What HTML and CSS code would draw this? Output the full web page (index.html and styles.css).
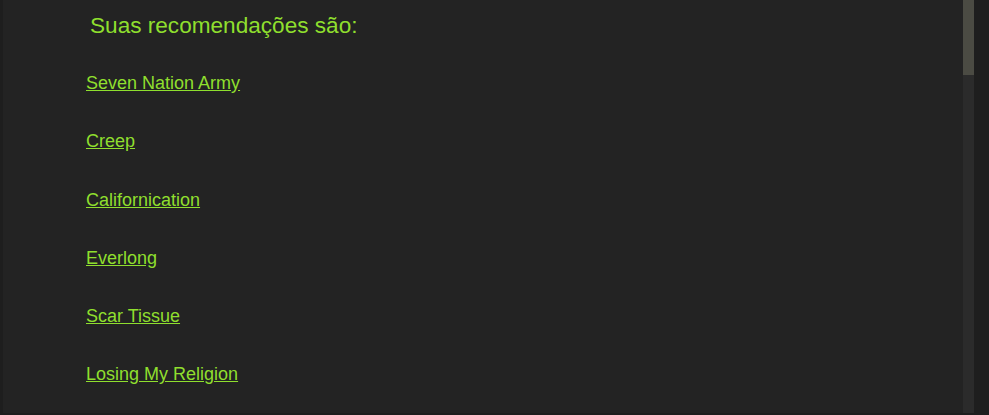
FILE: index.html
```html
<!DOCTYPE html>
<html lang="pt-BR">
<head>
<meta charset="utf-8">
<title>Recomendações</title>
<link rel="stylesheet" href="styles.css">
</head>
<body>
<main class="panel">
  <section class="results">
    <h2 class="title">Suas recomendações são:</h2>
    <ul class="list">
      <li><a href="#">Seven Nation Army</a></li>
      <li><a href="#">Creep</a></li>
      <li><a href="#">Californication</a></li>
      <li><a href="#">Everlong</a></li>
      <li><a href="#">Scar Tissue</a></li>
      <li><a href="#">Losing My Religion</a></li>
    </ul>
  </section>
  <div class="scrollbar"><div class="thumb"></div></div>
</main>
</body>
</html>
```
FILE: styles.css
```css
html, body {
  margin: 0;
  padding: 0;
  height: 100%;
  overflow: hidden;
}
body {
  background: #1e1e1e;
  font-family: "Liberation Sans", Arial, sans-serif;
  padding: 0 15px 2px 3px;
  box-sizing: border-box;
}
.panel {
  height: 413px;
  background: #232323;
  display: flex;
  overflow: hidden;
}
.results {
  flex: 1;
  padding: 12px 0 0 83px;
}
.scrollbar {
  width: 11px;
  flex: none;
  background: #2b2b2b;
}
.thumb {
  height: 75px;
  background: #4b4b43;
}
.title {
  margin: 0 0 0 4px;
  font-size: 22.6px;
  line-height: 28px;
  font-weight: normal;
  color: #8fdf2e;
}
.list {
  list-style: none;
  margin: 33px 0 0;
  padding: 0;
  display: flex;
  flex-direction: column;
  gap: 37.25px;
}
.list li {
  font-size: 18px;
  line-height: 21px;
}
.list a {
  color: #8fdf2e;
  text-decoration: underline;
}
```
